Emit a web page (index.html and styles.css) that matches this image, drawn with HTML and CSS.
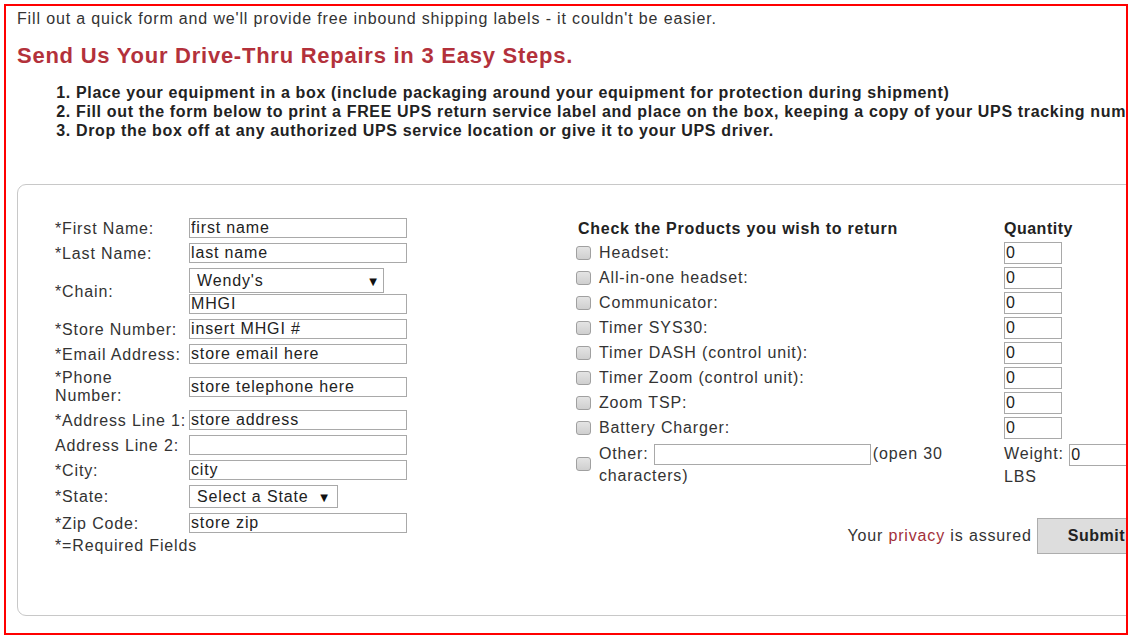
FILE: index.html
```html
<!DOCTYPE html>
<html lang="en">
<head>
<meta charset="utf-8">
<title>Drive-Thru Repairs</title>
<link rel="stylesheet" href="styles.css">
</head>
<body>
<div class="frame">
  <p class="intro">Fill out a quick form and we'll provide free inbound shipping labels - it couldn't be easier.</p>
  <h2 class="title">Send Us Your Drive-Thru Repairs in 3 Easy Steps.</h2>
  <ol class="steps">
    <li>Place your equipment in a box (include packaging around your equipment for protection during shipment)</li>
    <li>Fill out the form below to print a FREE UPS return service label and place on the box, keeping a copy of your UPS tracking number</li>
    <li>Drop the box off at any authorized UPS service location or give it to your UPS driver.</li>
  </ol>
  <form class="card">
    <div class="store">
      <label class="lbl">*First Name:</label><input class="txt" type="text" value="first name">
      <label class="lbl">*Last Name:</label><input class="txt" type="text" value="last name">
      <label class="lbl">*Chain:</label>
      <div class="stack">
        <div class="sel sel-chain"><select><option>Wendy's</option></select></div>
        <input class="txt" type="text" value="MHGI">
      </div>
      <label class="lbl">*Store Number:</label><input class="txt" type="text" value="insert MHGI #">
      <label class="lbl">*Email Address:</label><input class="txt" type="text" value="store email here">
      <label class="lbl lbl-two">*Phone<br>Number:</label><input class="txt" type="text" value="store telephone here">
      <label class="lbl">*Address Line 1:</label><input class="txt" type="text" value="store address">
      <label class="lbl">Address Line 2:</label><input class="txt" type="text" value="">
      <label class="lbl">*City:</label><input class="txt" type="text" value="city">
      <label class="lbl">*State:</label>
      <div class="sel sel-state"><select><option>Select a State</option></select></div>
      <label class="lbl">*Zip Code:</label><input class="txt" type="text" value="store zip">
      <span class="lbl req">*=Required Fields</span>
    </div>
    <div class="products">
      <div class="grid">
        <div class="head head-wide">Check the Products you wish to return</div>
        <div class="head head-qty">Quantity</div>

        <input class="chk" type="checkbox"><span class="plabel">Headset:</span><input class="qty" type="text" value="0">
        <input class="chk" type="checkbox"><span class="plabel">All-in-one headset:</span><input class="qty" type="text" value="0">
        <input class="chk" type="checkbox"><span class="plabel">Communicator:</span><input class="qty" type="text" value="0">
        <input class="chk" type="checkbox"><span class="plabel">Timer SYS30:</span><input class="qty" type="text" value="0">
        <input class="chk" type="checkbox"><span class="plabel">Timer DASH (control unit):</span><input class="qty" type="text" value="0">
        <input class="chk" type="checkbox"><span class="plabel">Timer Zoom (control unit):</span><input class="qty" type="text" value="0">
        <input class="chk" type="checkbox"><span class="plabel">Zoom TSP:</span><input class="qty" type="text" value="0">
        <input class="chk" type="checkbox"><span class="plabel">Battery Charger:</span><input class="qty" type="text" value="0">
        <input class="chk" type="checkbox"><span class="plabel other">Other: <input class="other-in" type="text" value="">(open 30 characters)</span><span class="weight">Weight: <input class="qty" type="text" value="0"> LBS</span>
      </div>
      <div class="privacy">
        <span>Your <a class="plink" href="#">privacy</a> is assured</span>
        <button class="submit" type="button">Submit</button>
      </div>
    </div>
  </form>
</div>
</body>
</html>
```
FILE: styles.css
```css
html, body {
  margin: 0;
  padding: 0;
  background: #fff;
}
body {
  font-family: "Liberation Sans", Arial, sans-serif;
  font-size: 16px;
  letter-spacing: 0.85px;
  color: #333;
}
.frame {
  box-sizing: border-box;
  width: 1124px;
  height: 631px;
  margin: 4px;
  border: 2px solid #ff0000;
  padding: 4px 0 0 11px;
  overflow: hidden;
}
.intro {
  margin: 0;
  line-height: 18px;
  color: #333;
}
.title {
  margin: 15px 0 0;
  font-size: 22px;
  line-height: 25px;
  font-weight: bold;
  letter-spacing: 0.75px;
  color: #b3313b;
}
.steps {
  margin: 15px 0 0;
  padding-left: 59px;
  font-weight: bold;
  letter-spacing: 0.65px;
  line-height: 19px;
  color: #222;
}
.steps li {
  white-space: nowrap;
}
.card {
  box-sizing: border-box;
  width: 1170px;
  height: 432px;
  margin-top: 44px;
  border: 1px solid #c8c8c8;
  border-radius: 9px;
  padding: 33px 0 0 37px;
  display: flex;
  gap: 171px;
  align-items: flex-start;
}
.store {
  display: grid;
  grid-template-columns: 134px 218px;
  row-gap: 5px;
  align-items: center;
}
.lbl {
  line-height: 18px;
  padding-top: 1px;
  color: #333;
  white-space: nowrap;
}
.lbl-two {
  line-height: 18px;
  padding-top: 0;
}
.req {
  grid-column: 1 / 3;
  margin-top: -2px;
}
.txt {
  box-sizing: border-box;
  width: 218px;
  height: 20px;
  margin: 0;
  padding: 0 1px;
  border: 1px solid #a9a9a9;
  font-family: "Liberation Sans", Arial, sans-serif;
  font-size: 16px;
  letter-spacing: 0.85px;
  color: #222;
  background: #fff;
}
.stack {
  display: flex;
  flex-direction: column;
  gap: 1px;
}
.sel {
  position: relative;
}
.sel select {
  appearance: none;
  -webkit-appearance: none;
  box-sizing: border-box;
  width: 100%;
  height: 100%;
  margin: 0;
  padding: 0 0 0 7px;
  border: 1px solid #a9a9a9;
  border-radius: 0;
  background: #fff;
  font-family: "Liberation Sans", Arial, sans-serif;
  font-size: 16px;
  letter-spacing: 0.85px;
  color: #222;
}
.sel::after {
  content: "\25BC";
  position: absolute;
  right: 7px;
  top: 50%;
  transform: translateY(-50%);
  font-family: "DejaVu Sans", sans-serif;
  font-size: 10px;
  letter-spacing: 0;
  color: #111;
  pointer-events: none;
}
.sel-chain {
  width: 195px;
  height: 25px;
}
.sel-state {
  width: 149px;
  height: 23px;
}
.sel-state::after {
  right: 10px;
}
.products {
  width: 578px;
  margin-top: 2px;
}
.grid {
  display: grid;
  grid-template-columns: 21px 405px 124px;
  row-gap: 3px;
  align-items: center;
}
.head {
  font-weight: bold;
  color: #222;
  line-height: 18px;
  margin-bottom: 1px;
  letter-spacing: 0.72px;
}
.head-qty {
  letter-spacing: 0.5px;
}
.head-wide {
  grid-column: 1 / 3;
}
.chk {
  appearance: none;
  -webkit-appearance: none;
  box-sizing: border-box;
  width: 15px;
  height: 14px;
  margin: 0 0 0 -2px;
  border: 1px solid #a0a0a0;
  border-radius: 3px;
  background: linear-gradient(#e4e4e4, #cfcfcf);
}
.plabel {
  line-height: 18px;
  color: #333;
}
.qty {
  box-sizing: border-box;
  width: 58px;
  height: 22px;
  margin: 0;
  padding: 0 1px;
  border: 1px solid #a9a9a9;
  font-family: "Liberation Sans", Arial, sans-serif;
  font-size: 16px;
  color: #222;
  background: #fff;
}
.other, .weight {
  line-height: 21px;
  align-self: start;
  margin-top: 1px;
}
.other-in {
  box-sizing: border-box;
  width: 217px;
  height: 21px;
  margin: 0 2px 0 0;
  padding: 0;
  border: 1px solid #a9a9a9;
  vertical-align: middle;
  font-family: "Liberation Sans", Arial, sans-serif;
  font-size: 16px;
  background: #fff;
}
.weight .qty {
  vertical-align: middle;
}
.privacy {
  display: flex;
  justify-content: flex-end;
  align-items: center;
  gap: 5px;
  margin-top: 31px;
  color: #333;
}
.plink {
  color: #a3303a;
  text-decoration: none;
}
.submit {
  height: 36px;
  margin: 0;
  padding: 0 30px;
  border: 1px solid #adadad;
  background: #dddddd;
  font-family: "Liberation Sans", Arial, sans-serif;
  font-size: 16px;
  font-weight: bold;
  letter-spacing: 0.5px;
  color: #222;
}
```
